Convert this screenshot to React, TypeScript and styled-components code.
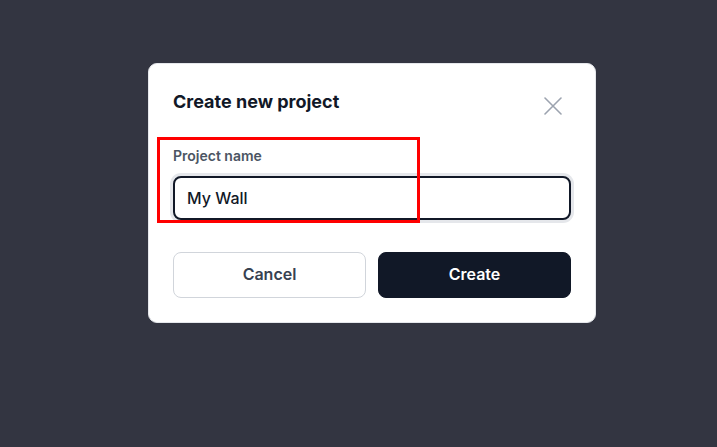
import React from "react";
import styled, { createGlobalStyle } from "styled-components";

const GlobalStyle = createGlobalStyle`
  html, body, #root {
    margin: 0;
    height: 100%;
  }
  body {
    background: #333541;
    font-family: Inter, "Noto Sans", sans-serif;
  }
  * {
    box-sizing: border-box;
  }
`;

const Overlay = styled.div`
  min-height: 100%;
  display: flex;
  align-items: flex-start;
  padding: 63px 0 0 148px;
`;

const Dialog = styled.div`
  position: relative;
  width: 448px;
  height: 260px;
  background: #ffffff;
  border: 1px solid #e5e7eb;
  border-radius: 9px;
  padding: 24px;
  display: flex;
  flex-direction: column;
`;

const Header = styled.div`
  display: flex;
  justify-content: space-between;
  align-items: flex-start;
  height: 58px;
`;

const Title = styled.h2`
  margin: 0;
  font-size: 18px;
  line-height: 27px;
  font-weight: 700;
  color: #111827;
`;

const CloseButton = styled.button`
  border: none;
  background: transparent;
  padding: 0;
  margin: 9px 9px 0 0;
  width: 18px;
  height: 18px;
  display: flex;
  cursor: pointer;
`;

const Label = styled.label`
  display: block;
  font-size: 14px;
  line-height: 20px;
  font-weight: 600;
  color: #4b5563;
  margin-bottom: 10px;
`;

const Input = styled.input`
  width: 398px;
  height: 44px;
  border: 2px solid #111827;
  border-radius: 8px;
  box-shadow: 0 0 0 3px #e5e7eb;
  padding: 0 12px;
  font-family: inherit;
  font-size: 16px;
  font-weight: 500;
  color: #111827;
  outline: none;
`;

const Actions = styled.div`
  display: flex;
  gap: 12px;
  margin-top: 32px;
`;

const Button = styled.button<{ $primary?: boolean }>`
  flex: 1;
  height: 46px;
  padding: 0 0 2px;
  border-radius: 8px;
  font-family: inherit;
  font-size: 16px;
  font-weight: 600;
  cursor: pointer;
  border: 1px solid ${(p) => (p.$primary ? "#111827" : "#d1d5db")};
  background: ${(p) => (p.$primary ? "#111827" : "#ffffff")};
  color: ${(p) => (p.$primary ? "#ffffff" : "#374151")};
`;

const Highlight = styled.div`
  position: absolute;
  left: 8px;
  top: 73px;
  width: 263px;
  height: 86px;
  border: 3px solid #ff0000;
  pointer-events: none;
`;

const App = () => {
  return (
    <>
      <GlobalStyle />
      <Overlay>
        <Dialog>
          <Header>
            <Title>Create new project</Title>
            <CloseButton aria-label="Close">
              <svg width="18" height="18" viewBox="0 0 18 18" fill="none">
                <path
                  d="M1 1L17 17M17 1L1 17"
                  stroke="#9ca3af"
                  strokeWidth="1.6"
                  strokeLinecap="round"
                />
              </svg>
            </CloseButton>
          </Header>
          <Label htmlFor="project-name">Project name</Label>
          <Input id="project-name" defaultValue="My Wall" />
          <Actions>
            <Button>Cancel</Button>
            <Button $primary>Create</Button>
          </Actions>
          <Highlight />
        </Dialog>
      </Overlay>
    </>
  );
};

export default App;
